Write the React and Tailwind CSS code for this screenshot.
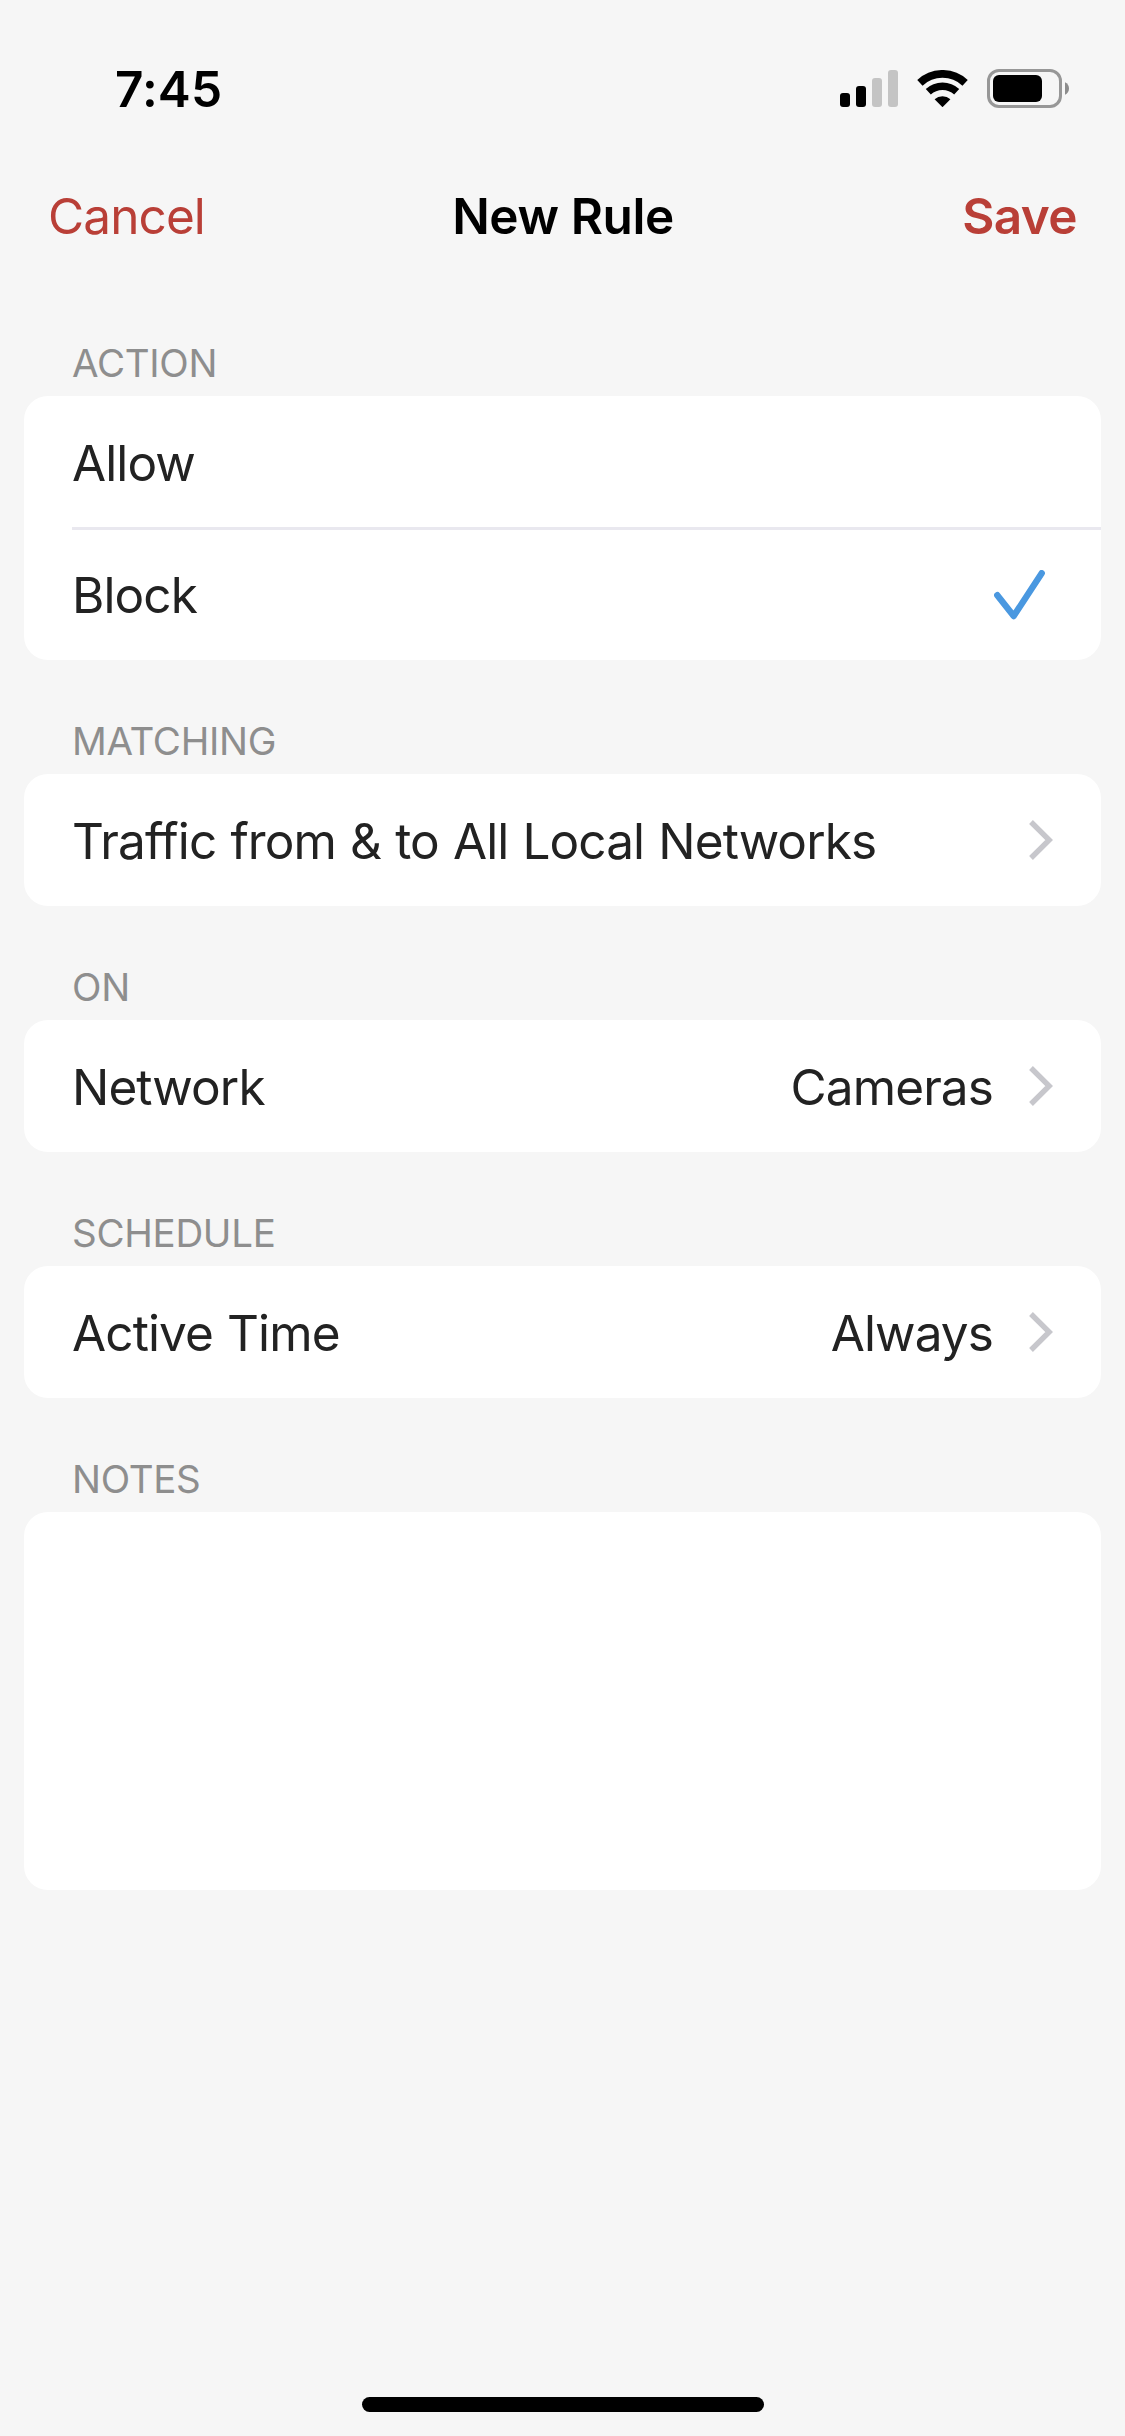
// src/pages/NewRule.jsx
import { useState } from 'react';

const CellularIcon = () => (
  <svg width="58" height="37" viewBox="0 0 58 37">
    <rect x="0" y="23" width="10" height="14" rx="3" fill="#000" />
    <rect x="16" y="16" width="10" height="21" rx="3" fill="#000" />
    <rect x="32" y="8" width="10" height="29" rx="3" fill="#c4c4c4" />
    <rect x="48" y="0" width="10" height="37" rx="3" fill="#c4c4c4" />
  </svg>
);

const WifiIcon = () => (
  <svg width="51" height="37" viewBox="0 0 51 37">
    <path d="M2.9 12.8A33.1 33.1 0 0 1 48.1 12.8" fill="none" stroke="#000" strokeWidth="7.8" />
    <path d="M11.3 21.8A20.8 20.8 0 0 1 39.7 21.8" fill="none" stroke="#000" strokeWidth="7.4" />
    <path d="M17.6 29.2A11.8 11.8 0 0 1 33.4 29.2L25.5 37.2Z" fill="#000" />
  </svg>
);

const BatteryIcon = () => (
  <svg width="82" height="39" viewBox="0 0 82 39">
    <rect x="1.5" y="1.5" width="72" height="36" rx="10.5" fill="none" stroke="#979797" strokeWidth="3" />
    <rect x="6" y="6" width="49" height="27" rx="6" fill="#000" />
    <path d="M78 13.2C80.5 14.2 82 16.7 82 19.5S80.5 24.8 78 25.8Z" fill="#8c8c8c" />
  </svg>
);

const CheckIcon = () => (
  <svg width="52" height="50" viewBox="0 0 52 50">
    <path d="M3.3 25.2L19.7 46L47.7 3.2" fill="none" stroke="#4a98e0" strokeWidth="6.4" strokeLinecap="round" strokeLinejoin="round" />
  </svg>
);

const ChevronIcon = () => (
  <svg width="24" height="40" viewBox="0 0 24 40">
    <path d="M2 2L20.2 20L2 38" fill="none" stroke="#c7c7cc" strokeWidth="5.4" />
  </svg>
);

const Section = ({ title, children }) => (
  <section>
    <h2 className="flex h-[114px] items-end px-12 pb-[9px] text-[38.5px] leading-[48px] tracking-[-0.3px] text-[#8e8e8e]">
      {title}
    </h2>
    <div className="overflow-hidden rounded-3xl bg-white">{children}</div>
  </section>
);

const LinkRow = ({ label, value }) => (
  <button className="flex h-[132px] w-full items-center px-12 text-left [word-spacing:1.1px]">
    <span className="flex-1 pt-0.5">{label}</span>
    {value && <span className="mr-9 pt-0.5">{value}</span>}
    <ChevronIcon />
  </button>
);

const App = () => {
  const [action, setAction] = useState('Block');
  const [notes, setNotes] = useState('');

  return (
    <div className="flex h-[2436px] w-[1125px] flex-col bg-[#f6f6f6] font-['Inter','Liberation_Sans',sans-serif] text-[49.5px] leading-[60px] tracking-[-0.9px] text-[#222]">
      {/* Status bar */}
      <div className="flex h-[132px] items-center justify-between pt-[45px] pr-14 pl-[115px] text-black">
        <span className="font-semibold tracking-[0.1px]">7:45</span>
        <div className="flex items-center">
          <CellularIcon />
          <div className="ml-[19px]">
            <WifiIcon />
          </div>
          <div className="ml-[19px]">
            <BatteryIcon />
          </div>
        </div>
      </div>

      {/* Nav bar */}
      <div className="grid h-[150px] grid-cols-3 items-start px-12 pt-[54px]">
        <button className="text-left text-[#b93f37]">Cancel</button>
        <h1 className="pl-px text-center font-semibold tracking-[-0.4px] text-black">New Rule</h1>
        <button className="text-right font-semibold tracking-[-0.6px] text-[#b93f37]">Save</button>
      </div>

      <main className="px-6">
        <Section title="ACTION">
          <div className="pl-12">
            <button
              onClick={() => setAction('Allow')}
              className="flex h-[134px] w-full items-center justify-between border-b-3 border-[#e9e8ef] pt-[3px] pr-[55px] text-left"
            >
              <span>Allow</span>
              {action === 'Allow' && <CheckIcon />}
            </button>
            <button
              onClick={() => setAction('Block')}
              className="flex h-[130px] w-full items-center justify-between pr-[55px] text-left"
            >
              <span>Block</span>
              {action === 'Block' && <CheckIcon />}
            </button>
          </div>
        </Section>

        <Section title="MATCHING">
          <LinkRow label="Traffic from & to All Local Networks" />
        </Section>

        <Section title="ON">
          <LinkRow label="Network" value="Cameras" />
        </Section>

        <Section title="SCHEDULE">
          <LinkRow label="Active Time" value="Always" />
        </Section>

        <Section title="NOTES">
          <textarea
            value={notes}
            onChange={(e) => setNotes(e.target.value)}
            className="block h-[378px] w-full resize-none px-12 py-9 outline-none"
          />
        </Section>
      </main>

      {/* Home indicator */}
      <div className="mx-auto mt-auto mb-6 h-[15px] w-[402px] rounded-full bg-black" />
    </div>
  );
};

export default App;
